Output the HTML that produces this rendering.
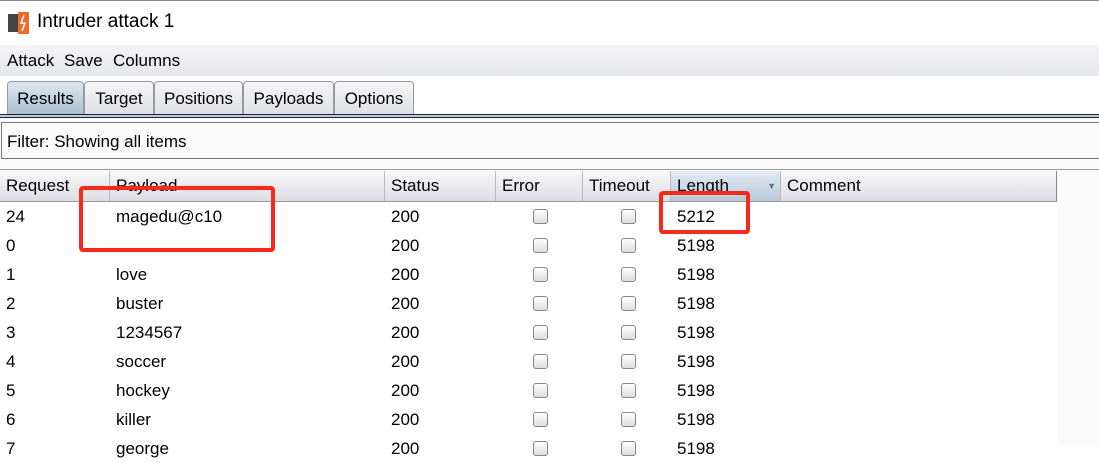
<!DOCTYPE html><html><head><style>
body{margin:0;width:1099px;height:445px;overflow:hidden;background:#fff;font-family:"Liberation Sans",Arial,sans-serif;color:#000;position:relative}
.a{position:absolute}
.title{top:0;left:0;width:1099px;height:45px;border-top:1px solid #888;background:#fff}
.menu{top:45px;left:0;width:1099px;height:31px;background:linear-gradient(#f4f4f6,#e6e7ea);font-size:17px}
.tab{position:absolute;top:81px;height:33px;border:1px solid #999;border-bottom:none;border-radius:4px 4px 0 0;background:linear-gradient(#f6f6f8,#dfe0e4);font-size:17px;line-height:33px;text-align:center;box-sizing:border-box}
.th{position:absolute;top:171px;height:30px;border-right:1px solid #bbb;box-sizing:border-box;font-size:17px;line-height:30px;padding-left:6px;background:linear-gradient(#f8f8fa,#dcdde2)}
.td{position:absolute;font-size:17px;line-height:29px;top:0}
.cb{position:absolute;width:13px;height:13px;border:1px solid #888;border-radius:3px;background:linear-gradient(#fff,#ddd)}
.red{position:absolute;border:4px solid #f52a1c;border-radius:4px;box-sizing:border-box}
</style></head><body>
<div class="a title">
<svg class="a" style="left:8px;top:11px" width="24" height="22"><rect x="0" y="2" width="10" height="18" fill="#444"/><rect x="10" y="0" width="11" height="22" fill="#f26a2a"/><path d="M16 3 L13 11 L17 11 L14 19" stroke="#fff" stroke-width="1.5" fill="none"/></svg>
<div class="a" style="left:37px;top:10px;font-size:19px">Intruder attack 1</div></div>
<div class="a menu"><span class="a" style="left:7px;top:6px">Attack</span><span class="a" style="left:64px;top:6px">Save</span><span class="a" style="left:113px;top:6px">Columns</span></div>
<div class="tab" style="left:7px;width:77px;background:linear-gradient(#dfe7ef,#aabfd3)">Results</div>
<div class="tab" style="left:84px;width:70px">Target</div>
<div class="tab" style="left:154px;width:89px">Positions</div>
<div class="tab" style="left:243px;width:91px">Payloads</div>
<div class="tab" style="left:334px;width:80px">Options</div>
<div class="a" style="left:0;top:114px;width:1099px;height:1px;background:#223"></div>
<div class="a" style="left:0;top:115px;width:1099px;height:2px;background:#b8cbe0"></div>
<div class="a" style="left:0;top:117px;width:1099px;height:1px;background:#223"></div>
<div class="a" style="left:0;top:118px;width:1099px;height:52px;background:#fafafa"></div>
<div class="a" style="left:1px;top:122px;width:1100px;height:37px;border:1px solid #777;background:#fafafa;font-size:17px;line-height:37px;padding-left:5px;box-sizing:border-box">Filter: Showing all items</div>
<div class="a" style="left:0;top:169px;width:1099px;height:1px;background:#999"></div>
<div class="a" style="left:1057px;top:171px;width:42px;height:274px;background:#fafafa"></div>
<div class="th" style="left:0;width:110px">Request</div>
<div class="th" style="left:110px;width:275px">Payload</div>
<div class="th" style="left:385px;width:111px">Status</div>
<div class="th" style="left:496px;width:87px">Error</div>
<div class="th" style="left:583px;width:88px">Timeout</div>
<div class="th" style="left:671px;width:110px;background:linear-gradient(#e4ebf2,#b8c9da)">Length<span style="position:absolute;right:4px;font-size:9px;color:#5a7a9a">▼</span></div>
<div class="th" style="left:781px;width:276px;border-right-color:#888">Comment</div>
<div class="a" style="left:0;top:201px;width:1057px;height:1px;background:#999"></div>
<div id="rows"></div>
<script>
var d=[["24","magedu@c10","5212"],["0","","5198"],["1","love","5198"],["2","buster","5198"],["3","1234567","5198"],["4","soccer","5198"],["5","hockey","5198"],["6","killer","5198"],["7","george","5198"]];
var h="";d.forEach(function(r,i){var y=202+i*29;
h+='<div class="a" style="left:0;top:'+y+'px;width:1057px;height:29px"><div class="td" style="left:6px">'+r[0]+'</div><div class="td" style="left:116px">'+r[1]+'</div><div class="td" style="left:391px">200</div><div class="td" style="left:677px">'+r[2]+'</div><div class="cb" style="left:533px;top:7px"></div><div class="cb" style="left:621px;top:7px"></div></div>';});
document.getElementById("rows").innerHTML=h;
</script>
<div class="red" style="left:79px;top:186px;width:196px;height:66px"></div>
<div class="red" style="left:659px;top:191px;width:91px;height:43px"></div>
</body></html>
